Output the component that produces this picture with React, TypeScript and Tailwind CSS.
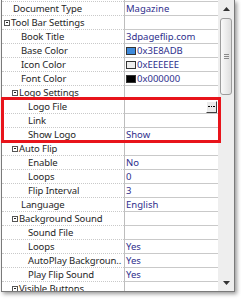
import React from "react";

type Row = {
  label: string;
  level: number;
  cat?: boolean;
  value?: string;
  swatch?: string;
  editor?: boolean;
};

const rows: Row[] = [
  { label: "Document Type", level: 0, value: "Magazine" },
  { label: "Tool Bar Settings", level: 0, cat: true },
  { label: "Book Title", level: 1, value: "3dpageflip.com" },
  { label: "Base Color", level: 1, value: "0x3E8ADB", swatch: "#3E8ADB" },
  { label: "Icon Color", level: 1, value: "0xEEEEEE", swatch: "#EEEEEE" },
  { label: "Font Color", level: 1, value: "0x000000", swatch: "#000000" },
  { label: "Logo Settings", level: 1, cat: true },
  { label: "Logo File", level: 2, editor: true },
  { label: "Link", level: 2 },
  { label: "Show Logo", level: 2, value: "Show" },
  { label: "Auto Flip", level: 1, cat: true },
  { label: "Enable", level: 2, value: "No" },
  { label: "Loops", level: 2, value: "0" },
  { label: "Flip Interval", level: 2, value: "3" },
  { label: "Language", level: 1, value: "English" },
  { label: "Background Sound", level: 1, cat: true },
  { label: "Sound File", level: 2 },
  { label: "Loops", level: 2, value: "Yes" },
  { label: "AutoPlay Backgroun..", level: 2, value: "Yes" },
  { label: "Play Flip Sound", level: 2, value: "Yes" },
  { label: "Visible Buttons", level: 1, cat: true },
];

const leafPad = ["pl-[11px]", "pl-[19px]", "pl-[26px]"];
const catPad = ["pl-[2px]", "pl-[10px]"];

const Minus = () => (
  <span className="mr-[1px] flex h-[6px] w-[6px] shrink-0 items-center justify-center border border-[#555] bg-white">
    <span className="h-px w-[2px] bg-[#222]" />
  </span>
);

const PropRow = ({ row }: { row: Row }) => (
  <div className="flex h-[14px] shrink-0">
    <div
      className={`flex w-[122px] shrink-0 items-center overflow-hidden whitespace-nowrap border-b border-dotted border-[#c9c9c9] text-[#262626] ${
        row.cat ? catPad[row.level] : leafPad[row.level]
      }`}
    >
      {row.cat && <Minus />}
      <span className="tracking-[-0.1px]">{row.label}</span>
    </div>
    <div className="flex w-[94px] shrink-0 items-center overflow-hidden whitespace-nowrap border-b border-l border-b-[#c9c9c9] border-l-[#bdbdbd] border-b-dotted pl-[1px] text-[#2e2e8c]">
      {row.swatch && (
        <span
          className="mr-[1px] h-[8px] w-[10px] shrink-0 border border-[#333]"
          style={{ backgroundColor: row.swatch }}
        />
      )}
      {row.value && <span>{row.value}</span>}
      {row.editor && (
        <div className="flex h-full w-full items-center justify-end bg-white pr-[1px]">
          <div className="flex h-[12px] w-[11px] items-center justify-center gap-[1px] border border-b-[#404040] border-l-white border-r-[#404040] border-t-white bg-[#ececec]">
            <span className="h-[1.5px] w-[1.5px] bg-black" />
            <span className="h-[1.5px] w-[1.5px] bg-black" />
            <span className="h-[1.5px] w-[1.5px] bg-black" />
          </div>
        </div>
      )}
    </div>
  </div>
);

const ScrollBar = () => (
  <div className="flex w-[16px] shrink-0 flex-col bg-[#eeeeee]">
    <div className="flex h-[18px] items-center justify-center">
      <svg width="7" height="4" viewBox="0 0 7 4">
        <path d="M3.5 0 L7 4 L0 4 Z" fill="#333" />
      </svg>
    </div>
    <div className="ml-[2px] flex h-[77px] w-[12px] flex-col items-center justify-center gap-[1px] rounded-[3px] border border-[#9c9c9c] bg-gradient-to-r from-[#fafafa] to-[#dedede]">
      <span className="h-px w-[5px] bg-[#8a8a8a]" />
      <span className="h-px w-[5px] bg-[#8a8a8a]" />
      <span className="h-px w-[5px] bg-[#8a8a8a]" />
    </div>
    <div className="flex-1" />
    <div className="flex h-[17px] items-center justify-center">
      <svg width="7" height="4" viewBox="0 0 7 4">
        <path d="M0 0 L7 0 L3.5 4 Z" fill="#333" />
      </svg>
    </div>
  </div>
);

export default function App() {
  return (
    <div className="relative h-[300px] w-[241px] overflow-hidden bg-white font-['Noto_Sans',sans-serif] text-[9.5px] leading-none">
      <div className="ml-[1px] flex h-[292px] w-[234px] border-b border-l border-r border-[#7a7a7a] bg-white shadow-[2px_2px_4px_rgba(0,0,0,0.4)]">
        <div className="flex w-[216px] flex-col overflow-hidden">
          <div className="flex h-[2px] shrink-0">
            <div className="w-[122px] border-b border-dotted border-[#c9c9c9]" />
            <div className="w-[94px] border-b border-l border-b-[#c9c9c9] border-l-[#bdbdbd] border-b-dotted" />
          </div>
          {rows.map((r, i) => (
            <PropRow key={i} row={r} />
          ))}
        </div>
        <ScrollBar />
      </div>
      <div className="absolute left-[1px] top-[97px] h-[46px] w-[220px] border-[3px] border-[#e8141b]" />
    </div>
  );
}
